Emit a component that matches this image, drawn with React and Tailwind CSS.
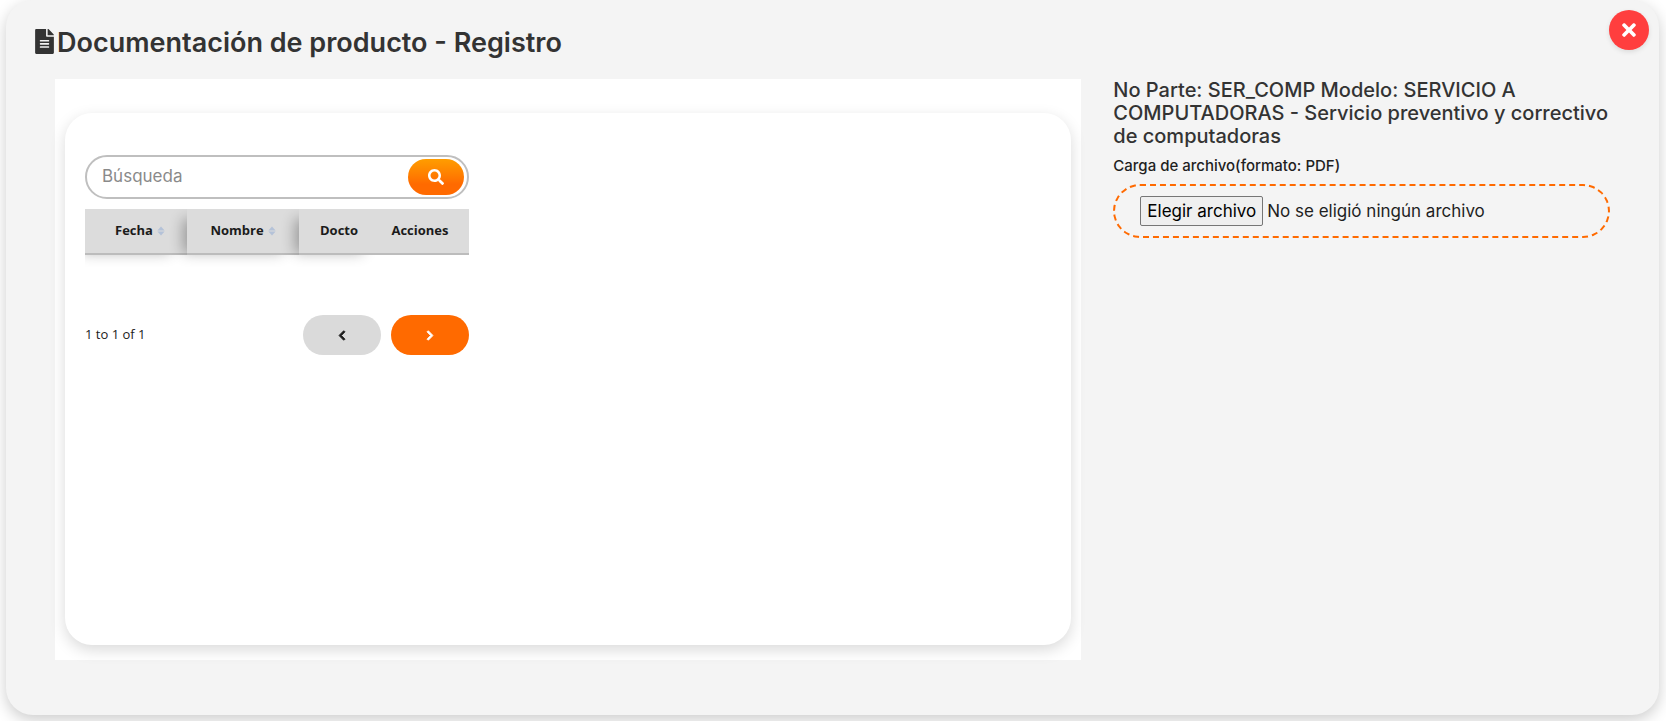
import { useState } from "react";
import { FaFileAlt, FaSearch, FaChevronLeft, FaChevronRight, FaTimes } from "react-icons/fa";

const SortIcon = () => (
  <svg viewBox="0 0 8 10" className="w-2 h-2.5 fill-[#b4c2d8]" aria-hidden="true">
    <path d="M4 0.5 L7.6 4.4 H0.4 Z" />
    <path d="M4 9.5 L7.6 5.6 H0.4 Z" />
  </svg>
);

const columns = [
  { name: "Fecha", sortable: true, style: "w-[102px] pl-2 shadow-[-10px_4px_14px_-6px_rgba(0,0,0,0.3)]" },
  { name: "Nombre", sortable: true, style: "w-[112px] shadow-[-10px_4px_14px_-6px_rgba(0,0,0,0.3)]" },
  { name: "Docto", style: "w-20 shadow-[-10px_4px_14px_-6px_rgba(0,0,0,0.3)]" },
  { name: "Acciones", style: "pr-2" },
];

const DocumentsTable = () => {
  const [search, setSearch] = useState("");

  return (
    <div className="w-96">
      <form
        onSubmit={(e) => e.preventDefault()}
        className="flex items-center h-11 rounded-full border-2 border-[#bfbfbf] bg-white pl-[15px] pr-[3px]"
      >
        <input
          type="text"
          aria-label="Búsqueda"
          placeholder="Búsqueda"
          value={search}
          onChange={(e) => setSearch(e.target.value)}
          className="flex-1 min-w-0 text-[17px] outline-none placeholder:text-[#8a8a8a]"
        />
        <button
          type="submit"
          aria-label="Buscar"
          className="flex items-center justify-center w-14 h-9 rounded-full text-white bg-linear-to-b from-[#ff9d00] to-[#ff6a00] to-70%"
        >
          <FaSearch className="w-4 h-4" />
        </button>
      </form>

      <div className="mt-2.5 pb-[60px] overflow-hidden">
        <table className="w-full table-fixed border-separate border-spacing-0 font-['Open_Sans','Noto_Sans',sans-serif] text-[13px] text-[#1b1b1b]">
          <thead>
            <tr>
              {columns.map((col) => (
                <th
                  key={col.name}
                  className={`h-[46px] bg-[#dcdcdc] border-b-2 border-[#bcbcbc] font-bold ${col.style}`}
                >
                  {col.sortable ? (
                    <button type="button" className="inline-flex items-center gap-1 font-bold">
                      {col.name}
                      <SortIcon />
                    </button>
                  ) : (
                    col.name
                  )}
                </th>
              ))}
            </tr>
          </thead>
        </table>
      </div>

      <div className="flex items-center gap-2.5">
        <span className="flex-1 font-['Open_Sans','Noto_Sans',sans-serif] text-[13px] text-[#1b1b1b]">1 to 1 of 1</span>
        <button
          type="button"
          aria-label="Anterior"
          className="flex items-center justify-center w-[78px] h-10 rounded-full bg-[#dadada] text-[#1b1b1b]"
        >
          <FaChevronLeft className="w-3 h-[11px]" strokeWidth={40} />
        </button>
        <button
          type="button"
          aria-label="Siguiente"
          className="flex items-center justify-center w-[78px] h-10 rounded-full bg-[#ff6a00] text-white"
        >
          <FaChevronRight className="w-3 h-[11px]" strokeWidth={40} />
        </button>
      </div>
    </div>
  );
};

const FileUpload = () => {
  const [fileName, setFileName] = useState("");

  return (
    <div className="mt-2">
      <p className="text-[15px] font-medium leading-5 text-[#1f1f1f]">Carga de archivo(formato: PDF)</p>
      <div className="mt-2 flex items-center gap-1 rounded-[27px] border-2 border-dashed border-[#ff6a00] px-[25px] py-2.5">
        <input
          id="archivo"
          type="file"
          accept="application/pdf"
          className="sr-only"
          onChange={(e) => setFileName(e.target.files[0]?.name ?? "")}
        />
        <label
          htmlFor="archivo"
          className="rounded-xs border border-[#767676] bg-[#efefef] px-1.5 py-0.5 text-[17px] leading-6 text-black whitespace-nowrap"
        >
          Elegir archivo
        </label>
        <span className="text-[17px] leading-6 text-[#1f1f1f]">{fileName || "No se eligió ningún archivo"}</span>
      </div>
    </div>
  );
};

const App = () => {
  const [open, setOpen] = useState(true);

  if (!open) return null;

  return (
    <div className="pb-[7px] bg-white overflow-hidden font-[Inter,'Open_Sans',sans-serif] text-[#333333]">
      <section className="relative ml-1.5 mr-[7px] rounded-[27px] bg-[#f4f4f4] px-[49px] pb-[55px] shadow-[0_5px_15px_rgba(0,0,0,0.2)]">
        <button
          type="button"
          aria-label="Cerrar"
          onClick={() => setOpen(false)}
          className="absolute right-2.5 top-2.5 flex items-center justify-center size-10 rounded-full bg-[#ff3e3e] text-white shadow-[0_2px_5px_rgba(0,0,0,0.1)]"
        >
          <FaTimes className="size-5" />
        </button>

        <h1 className="-ml-5 flex h-[79px] items-start gap-[3px] pt-[29px] text-[27px] leading-[28px] font-semibold">
          <FaFileAlt className="w-[19px] h-[25px]" />
          Documentación de producto - Registro
        </h1>

        <div className="flex gap-8">
          <div className="w-[66%] shrink-0 bg-white px-2.5 pt-[34px] pb-[15px]">
            <div className="min-h-[532px] rounded-[27px] bg-white px-5 pt-[42px] shadow-[0_5px_15px_rgba(0,0,0,0.15)]">
              <DocumentsTable />
            </div>
          </div>

          <div className="flex-1 min-w-0">
            <h2 className="text-xl leading-[23px] font-medium">
              No Parte: SER_COMP Modelo: SERVICIO A COMPUTADORAS - Servicio preventivo y correctivo de computadoras
            </h2>
            <FileUpload />
          </div>
        </div>
      </section>
    </div>
  );
};

export default App;
